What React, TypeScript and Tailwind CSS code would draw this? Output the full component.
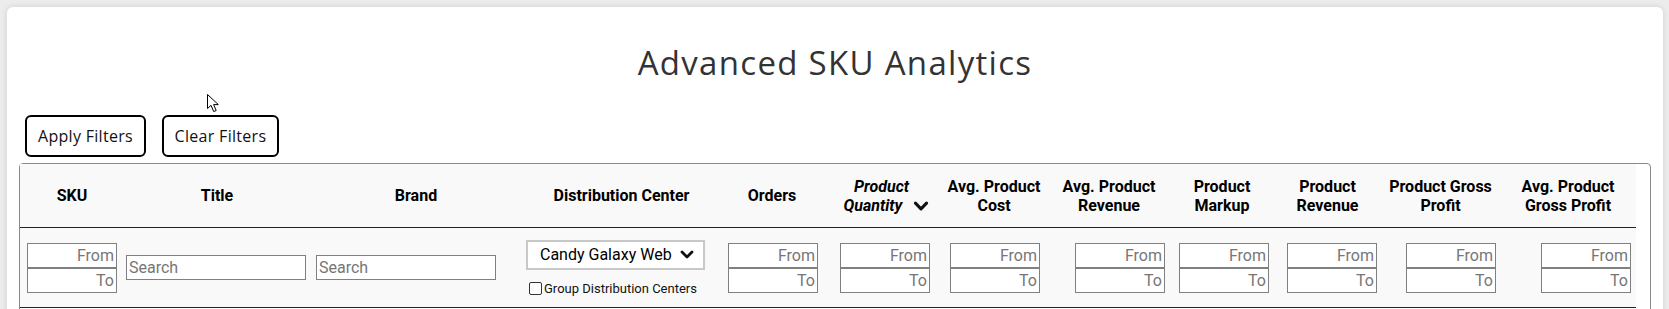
import React from "react";

const roboto = { fontFamily: "Roboto, 'Liberation Sans', sans-serif" };

function RangeInputs({ pl }: { pl: string }) {
  return (
    <div className={`flex flex-col ${pl}`}>
      <input
        placeholder="From"
        className="h-[25px] w-[90px] border border-[#808080] bg-white pr-[2px] text-right text-[16px] text-black placeholder:text-[#767676] outline-none"
        style={roboto}
      />
      <input
        placeholder="To"
        className="h-[25px] w-[90px] border border-[#808080] bg-white pr-[2px] text-right text-[16px] text-black placeholder:text-[#767676] outline-none"
        style={roboto}
      />
    </div>
  );
}

function SearchInput({ pl }: { pl: string }) {
  return (
    <div className={pl}>
      <input
        placeholder="Search"
        className="h-[25px] w-[180px] border border-[#808080] bg-white pl-[2px] text-left text-[16px] text-black placeholder:text-[#767676] outline-none"
        style={roboto}
      />
    </div>
  );
}

function Chevron({ className, w = 14, h = 9 }: { className?: string; w?: number; h?: number }) {
  return (
    <svg width={w} height={h} viewBox="0 0 14 9" className={className}>
      <polyline points="2,2 7,7 12,2" fill="none" stroke="#111" strokeWidth="2.8" strokeLinecap="round" strokeLinejoin="round" />
    </svg>
  );
}

export default function App() {
  const headerCell = "flex items-center justify-center text-center text-[16px] font-bold leading-[19px] text-black";
  const cols = "grid-cols-[104px_186px_212px_199px_102px_117px_108px_122px_104px_107px_119px_136px]";
  return (
    <div className="relative min-h-screen bg-[#ececec] pl-[7px] pr-[6px] pt-[7px]">
      <div className="min-h-[320px] rounded-[6px] bg-white shadow-[0_0_6px_rgba(0,0,0,0.12)]">
        <h1
          className="pt-[37px] text-center text-[33px] font-normal leading-[38px] tracking-[1.3px] text-[#333333]"
          style={{ fontFamily: "'Open Sans', 'Noto Sans', sans-serif" }}
        >
          Advanced SKU Analytics
        </h1>
        <div
          className="mt-[33px] flex gap-[16px] pl-[18px] text-[16px] tracking-[0.3px] text-[#111]"
          style={{ fontFamily: "'Open Sans', 'Noto Sans', sans-serif" }}
        >
          <button className="h-[42px] w-[121px] rounded-[6px] border-2 border-black bg-white">Apply Filters</button>
          <button className="h-[42px] w-[117px] rounded-[6px] border-2 border-black bg-white">Clear Filters</button>
        </div>
        <div className="mx-[12px] mt-[6px] h-[200px] rounded-[4px] border border-[#8a8a8a]">
          <div className="w-[1616px]" style={roboto}>
            <div className={`grid h-[64px] ${cols} border-b border-[#222] bg-[#f9f9f9]`}>
              <div className={headerCell}>SKU</div>
              <div className={headerCell}>Title</div>
              <div className={headerCell}>Brand</div>
              <div className={headerCell}>Distribution Center</div>
              <div className={headerCell}>Orders</div>
              <div className={`${headerCell} flex-col italic`}>
                <span>Product</span>
                <span className="flex items-center pl-[10px]">
                  Quantity
                  <Chevron className="ml-[11px] mt-[2px]" w={16} h={10} />
                </span>
              </div>
              <div className={headerCell}>Avg. Product<br />Cost</div>
              <div className={headerCell}>Avg. Product<br />Revenue</div>
              <div className={headerCell}>Product<br />Markup</div>
              <div className={headerCell}>Product<br />Revenue</div>
              <div className={headerCell}>Product Gross<br />Profit</div>
              <div className={headerCell}>Avg. Product<br />Gross Profit</div>
            </div>
            <div className={`grid h-[80px] ${cols} items-center border-b border-[#222] bg-[#f9f9f9]`}>
              <RangeInputs pl="pl-[7px]" />
              <SearchInput pl="pl-[2px]" />
              <SearchInput pl="pl-[6px]" />
              <div className="flex flex-col pl-[4px]">
                <div className="flex h-[30px] w-[179px] items-center justify-between border-2 border-[#c8c8c8] bg-white pl-[12px] pr-[9px] text-[16px] text-black">
                  <span>Candy Galaxy Web</span>
                  <Chevron />
                </div>
                <div className="mt-[11px] flex h-[15px] items-center pl-[3px]">
                  <span className="h-[13px] w-[13px] rounded-[2px] border border-[#333] bg-white" />
                  <span className="ml-[2px] text-[13px] leading-[15px] text-[#111]">Group Distribution Centers</span>
                </div>
              </div>
              <RangeInputs pl="pl-[7px]" />
              <RangeInputs pl="pl-[17px]" />
              <RangeInputs pl="pl-[10px]" />
              <RangeInputs pl="pl-[27px]" />
              <RangeInputs pl="pl-[9px]" />
              <RangeInputs pl="pl-[13px]" />
              <RangeInputs pl="pl-[25px]" />
              <RangeInputs pl="pl-[41px]" />
            </div>
          </div>
        </div>
      </div>
      <svg className="absolute left-[207px] top-[94px]" width="15" height="19" viewBox="0 0 15 19">
        <path d="M0.5 0.5 V14.5 L4 11.3 L6.7 17.6 L9.2 16.5 L6.6 10.6 H11.3 Z" fill="#fff" stroke="#000" strokeWidth="1" strokeLinejoin="miter" />
      </svg>
    </div>
  );
}
